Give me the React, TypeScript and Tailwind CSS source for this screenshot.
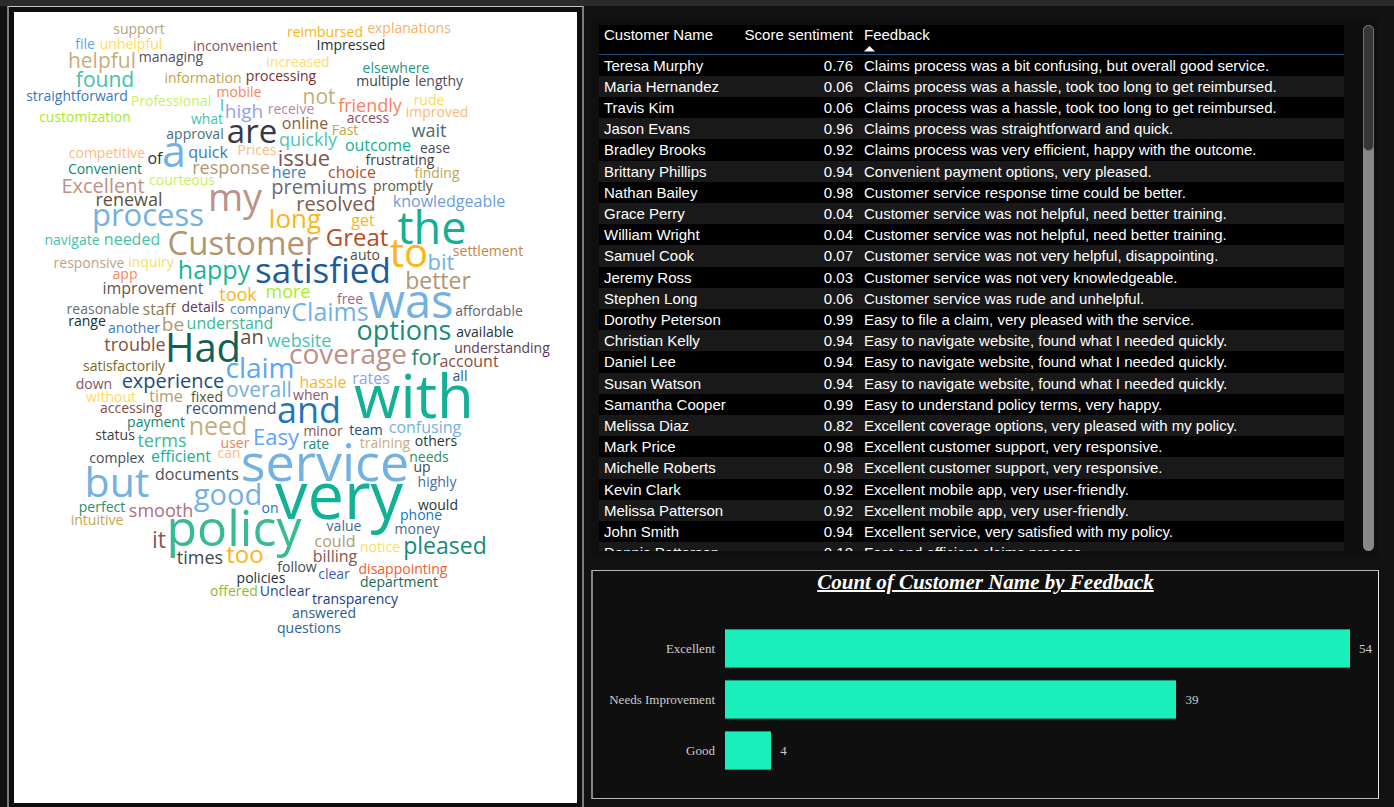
type Word = [text: string, x: number, baseline: number, size: number, color: string];

const WORDS: Word[] = [
  ['support', 139, 33, 14, '#b8a37e'],
  ['file', 85, 48, 14, '#5ba3f5'],
  ['unhelpful', 131, 48, 14, '#ffdc5c'],
  ['inconvenient', 235, 50, 14, '#7f5a63'],
  ['reimbursed', 325, 36, 14, '#f9b414'],
  ['explanations', 409, 32, 14, '#f7b069'],
  ['Impressed', 351, 49, 14, '#1e343a'],
  ['helpful', 102, 67, 21, '#c6ae7c'],
  ['managing', 171, 61, 14, '#50505c'],
  ['increased', 298, 66, 14, '#fbdc70'],
  ['elsewhere', 396, 72, 14, '#2a9587'],
  ['found', 105, 86, 21, '#45c1ad'],
  ['information', 203, 82, 14, '#bea445'],
  ['processing', 281, 80, 14, '#76302f'],
  ['multiple', 383, 85, 14, '#3d4545'],
  ['lengthy', 439, 85, 14, '#4b4c5c'],
  ['straightforward', 77, 100, 14, '#3778bd'],
  ['Professional', 171, 105, 14, '#c5f264'],
  ['mobile', 239, 96, 14, '#f5875e'],
  ['I', 222, 110, 16, '#45c1ad'],
  ['high', 244, 117, 19, '#91a2ea'],
  ['receive', 291, 113, 14, '#bd8698'],
  ['not', 319, 103, 21, '#c6ae7c'],
  ['friendly', 370, 111, 18, '#f5835b'],
  ['rude', 429, 104, 14, '#fbdc59'],
  ['improved', 437, 116, 14, '#fcb973'],
  ['customization', 85, 121, 14, '#a6ec17'],
  ['what', 207, 123, 14, '#45c1ad'],
  ['access', 368, 122, 14, '#83525e'],
  ['online', 305, 128, 16, '#8a5a4a'],
  ['Fast', 345, 134, 14, '#c0a54b'],
  ['wait', 429, 136, 18, '#4d6973'],
  ['approval', 195, 138, 14, '#48707a'],
  ['are', 252, 142, 33, '#353a48'],
  ['quickly', 308, 145, 18, '#4bc6b4'],
  ['outcome', 378, 150, 16, '#12b294'],
  ['ease', 435, 152, 14, '#4b4c58'],
  ['competitive', 107, 157, 14, '#fcbb80'],
  ['of', 155, 163, 16, '#223740'],
  ['a', 174, 166, 43, '#73b1e2'],
  ['quick', 208, 157, 16, '#357abd'],
  ['Prices', 257, 154, 14, '#fcbb80'],
  ['issue', 304, 165, 22, '#7b574c'],
  ['frustrating', 400, 164, 14, '#3c4347'],
  ['Convenient', 105, 173, 14, '#128770'],
  ['response', 231, 173, 18, '#b39670'],
  ['here', 289, 177, 16, '#417ebe'],
  ['choice', 352, 177, 16, '#bb4d2a'],
  ['finding', 437, 177, 14, '#bfa64f'],
  ['Excellent', 103, 192, 20, '#bd9086'],
  ['courteous', 182, 184, 14, '#c5f264'],
  ['premiums', 319, 193, 20, '#686b76'],
  ['promptly', 403, 190, 14, '#5a5a40'],
  ['renewal', 129, 205, 18, '#5b533f'],
  ['my', 235, 210, 38, '#bd9288'],
  ['resolved', 336, 210, 20, '#7b5b51'],
  ['knowledgeable', 449, 206, 16, '#6f9bdc'],
  ['process', 148, 225, 31, '#73b1e2'],
  ['long', 295, 227, 26, '#fdb515'],
  ['get', 363, 225, 16, '#fdb515'],
  ['the', 432, 243, 45, '#12b094'],
  ['navigate', 72, 244, 14, '#45bfae'],
  ['needed', 132, 244, 16, '#45bfa6'],
  ['Customer', 243, 254, 33, '#b29670'],
  ['Great', 357, 245, 24, '#b84c29'],
  ['to', 409, 266, 40, '#fdb515'],
  ['settlement', 488, 255, 14, '#c68444'],
  ['auto', 365, 259, 14, '#544f38'],
  ['responsive', 89, 267, 14, '#bba57f'],
  ['inquiry', 151, 266, 14, '#fbda6e'],
  ['happy', 214, 278, 25, '#17b596'],
  ['satisfied', 323, 282, 35, '#1d5c99'],
  ['bit', 441, 269, 22, '#73b1e2'],
  ['better', 438, 288, 23, '#b29670'],
  ['app', 125, 278, 14, '#f5875e'],
  ['improvement', 153, 293, 16, '#675552'],
  ['took', 238, 300, 18, '#fdb515'],
  ['more', 288, 297, 18, '#a5f01a'],
  ['free', 350, 303, 14, '#a5647c'],
  ['Claims', 330, 320, 25, '#73b1e2'],
  ['was', 411, 317, 47, '#73b1e2'],
  ['affordable', 489, 315, 14, '#62656e'],
  ['reasonable', 103, 313, 14, '#6a6d78'],
  ['staff', 159, 314, 16, '#8a7d5a'],
  ['details', 203, 311, 14, '#5c3557'],
  ['company', 260, 313, 14, '#4c84c0'],
  ['range', 87, 325, 14, '#16302f'],
  ['another', 134, 332, 14, '#427dbe'],
  ['be', 173, 330, 19, '#b29670'],
  ['understand', 230, 328, 16, '#3bb995'],
  ['options', 404, 339, 27, '#178b76'],
  ['available', 485, 336, 14, '#1d3436'],
  ['trouble', 135, 350, 18, '#855043'],
  ['Had', 203, 361, 40, '#126055'],
  ['an', 252, 343, 20, '#5a533d'],
  ['website', 299, 346, 18, '#49c4b4'],
  ['coverage', 348, 363, 28, '#bd9086'],
  ['for', 426, 364, 22, '#278a68'],
  ['account', 469, 366, 16, '#855043'],
  ['understanding', 502, 352, 14, '#5e3b5b'],
  ['satisfactorily', 124, 370, 14, '#7c6a1e'],
  ['claim', 260, 377, 28, '#5ba5fa'],
  ['experience', 173, 387, 20, '#224d7a'],
  ['overall', 259, 396, 21, '#73b1e2'],
  ['hassle', 323, 387, 16, '#fdb515'],
  ['rates', 371, 383, 16, '#8f9fea'],
  ['all', 460, 380, 14, '#285c8c'],
  ['with', 414, 417, 60, '#12b094'],
  ['down', 94, 388, 14, '#805664'],
  ['without', 111, 401, 14, '#ffdc5c'],
  ['time', 166, 401, 16, '#b39a70'],
  ['fixed', 207, 401, 14, '#55503c'],
  ['when', 311, 399, 14, '#85596a'],
  ['accessing', 131, 412, 14, '#855043'],
  ['recommend', 231, 413, 16, '#365b87'],
  ['and', 309, 422, 36, '#2375bb'],
  ['payment', 156, 426, 14, '#128770'],
  ['need', 218, 434, 25, '#c6ae7c'],
  ['Easy', 276, 444, 22, '#5ba5fa'],
  ['minor', 323, 435, 14, '#85584c'],
  ['team', 366, 434, 14, '#234e76'],
  ['confusing', 425, 432, 16, '#73b1e2'],
  ['status', 115, 439, 14, '#3a4042'],
  ['terms', 162, 446, 18, '#3bb995'],
  ['user', 235, 447, 14, '#f47e52'],
  ['rate', 316, 448, 14, '#168b76'],
  ['training', 385, 447, 14, '#c6ae7c'],
  ['others', 436, 445, 14, '#173a30'],
  ['complex', 117, 462, 14, '#484a55'],
  ['efficient', 181, 461, 16, '#15b294'],
  ['can', 229, 457, 14, '#fcbb80'],
  ['needs', 429, 461, 14, '#2a8f6d'],
  ['service', 325, 480, 52, '#73b1e2'],
  ['up', 422, 471, 14, '#43484d'],
  ['but', 117, 496, 41, '#73b1e2'],
  ['documents', 197, 479, 16, '#4a4c5c'],
  ['good', 228, 504, 29, '#73b1e2'],
  ['highly', 437, 486, 14, '#48699a'],
  ['perfect', 102, 511, 14, '#2a8f6d'],
  ['smooth', 161, 516, 18, '#af6d84'],
  ['on', 270, 512, 14, '#1d6fbd'],
  ['very', 339, 518, 65, '#12b094'],
  ['would', 438, 509, 14, '#1b3a32'],
  ['phone', 421, 519, 14, '#1273c4'],
  ['intuitive', 97, 524, 14, '#bfa64f'],
  ['policy', 234, 545, 50, '#38ba95'],
  ['value', 344, 530, 14, '#456891'],
  ['money', 417, 533, 14, '#4b6790'],
  ['it', 159, 547, 23, '#855a50'],
  ['could', 335, 546, 16, '#b39a70'],
  ['notice', 380, 551, 14, '#ffdc5c'],
  ['pleased', 445, 553, 23, '#178b76'],
  ['times', 200, 563, 18, '#41484b'],
  ['too', 245, 562, 24, '#fdb515'],
  ['billing', 335, 561, 16, '#7e574d'],
  ['follow', 297, 571, 14, '#484b4d'],
  ['clear', 334, 578, 14, '#3c5cba'],
  ['disappointing', 403, 573, 14, '#ee5c34'],
  ['policies', 261, 582, 14, '#1b3340'],
  ['department', 399, 586, 14, '#1b6b57'],
  ['offered', 234, 595, 14, '#93b92f'],
  ['Unclear', 285, 595, 14, '#2d3f91'],
  ['transparency', 355, 603, 14, '#243b87'],
  ['answered', 324, 617, 14, '#25608f'],
  ['questions', 309, 632, 14, '#2f6491'],
];

const ROWS: [name: string, score: string, feedback: string][] = [
  ['Teresa Murphy', '0.76', 'Claims process was a bit confusing, but overall good service.'],
  ['Maria Hernandez', '0.06', 'Claims process was a hassle, took too long to get reimbursed.'],
  ['Travis Kim', '0.06', 'Claims process was a hassle, took too long to get reimbursed.'],
  ['Jason Evans', '0.96', 'Claims process was straightforward and quick.'],
  ['Bradley Brooks', '0.92', 'Claims process was very efficient, happy with the outcome.'],
  ['Brittany Phillips', '0.94', 'Convenient payment options, very pleased.'],
  ['Nathan Bailey', '0.98', 'Customer service response time could be better.'],
  ['Grace Perry', '0.04', 'Customer service was not helpful, need better training.'],
  ['William Wright', '0.04', 'Customer service was not helpful, need better training.'],
  ['Samuel Cook', '0.07', 'Customer service was not very helpful, disappointing.'],
  ['Jeremy Ross', '0.03', 'Customer service was not very knowledgeable.'],
  ['Stephen Long', '0.06', 'Customer service was rude and unhelpful.'],
  ['Dorothy Peterson', '0.99', 'Easy to file a claim, very pleased with the service.'],
  ['Christian Kelly', '0.94', 'Easy to navigate website, found what I needed quickly.'],
  ['Daniel Lee', '0.94', 'Easy to navigate website, found what I needed quickly.'],
  ['Susan Watson', '0.94', 'Easy to navigate website, found what I needed quickly.'],
  ['Samantha Cooper', '0.99', 'Easy to understand policy terms, very happy.'],
  ['Melissa Diaz', '0.82', 'Excellent coverage options, very pleased with my policy.'],
  ['Mark Price', '0.98', 'Excellent customer support, very responsive.'],
  ['Michelle Roberts', '0.98', 'Excellent customer support, very responsive.'],
  ['Kevin Clark', '0.92', 'Excellent mobile app, very user-friendly.'],
  ['Melissa Patterson', '0.92', 'Excellent mobile app, very user-friendly.'],
  ['John Smith', '0.94', 'Excellent service, very satisfied with my policy.'],
  ['Dennis Patterson', '0.18', 'Fast and efficient claims process.'],
];

const BARS = [
  { label: 'Excellent', count: 54 },
  { label: 'Needs Improvement', count: 39 },
  { label: 'Good', count: 4 },
];
const MAX_COUNT = 54;

function WordCloud() {
  return (
    <section
      aria-label="Feedback word cloud"
      className="flex border-x-2 border-t border-x-[#7c7c7c] border-t-[#c4c4c4] bg-[#0e0e0e] px-[5px] pt-[5px] pb-1"
    >
      <div className="flex-1 bg-white">
        <svg viewBox="14 11 563 791" preserveAspectRatio="xMidYMin meet" className="block w-full font-['Open_Sans',sans-serif]">
          {WORDS.map(([text, x, baseline, size, color]) => (
            <text key={text} x={x} y={baseline} fontSize={size} fill={color} textAnchor="middle">
              {text}
            </text>
          ))}
        </svg>
      </div>
    </section>
  );
}

function FeedbackTable() {
  return (
    <section aria-label="Customer feedback" className="flex bg-[#0f0f0f] pt-[5px] pr-[5px] pb-[6px] pl-2">
      <div className="h-[526px] flex-1 overflow-y-auto [scrollbar-width:none]">
        <table className="w-full table-fixed border-separate border-spacing-0 font-['Liberation_Sans',Arial,sans-serif] text-[15px] leading-5 text-white">
          <colgroup>
            <col className="w-[140px]" />
            <col className="w-[120px]" />
            <col />
          </colgroup>
          <thead className="sticky top-0 bg-black">
            <tr className="h-[30px]">
              <th scope="col" className="border-b border-[#1b4f7a] p-0 pl-[5px] text-left align-top font-normal whitespace-nowrap">
                Customer Name
              </th>
              <th scope="col" className="border-b border-[#1b4f7a] p-0 pr-[6px] text-right align-top font-normal whitespace-nowrap">
                Score sentiment
              </th>
              <th scope="col" aria-sort="ascending" className="border-b border-[#1b4f7a] p-0 pl-[5px] text-left align-top font-normal">
                <button type="button" className="block text-left">
                  Feedback
                  <svg viewBox="0 0 11 6" className="mt-px block h-[6px] w-[11px] fill-white" aria-hidden="true">
                    <path d="M5.5 0 11 5.5H0Z" />
                  </svg>
                </button>
              </th>
            </tr>
          </thead>
          <tbody>
            {ROWS.map(([name, score, feedback], i) => (
              <tr key={i} className="h-[21px] bg-black even:bg-[#191919] nth-[5n]:h-[22px]">
                <td className="p-0 pl-[5px] whitespace-nowrap">{name}</td>
                <td className="p-0 pr-[6px] text-right">{score}</td>
                <td className="p-0 pl-[5px] whitespace-nowrap">{feedback}</td>
              </tr>
            ))}
          </tbody>
        </table>
      </div>
      <div className="ml-[19px] w-[11px] rounded-full bg-[#878787]">
        <div className="h-[126px] rounded-full border border-[#6e6e6e] bg-[#373635]" />
      </div>
    </section>
  );
}

function FeedbackChart() {
  return (
    <section
      aria-labelledby="chart-title"
      className="border border-l-2 border-[#b8b8b8] border-r-[#e8e8e8] border-l-[#868686] bg-[#0f0f0f] pb-7 font-['Liberation_Serif','Times_New_Roman',serif]"
    >
      <h2 id="chart-title" className="text-center text-[21px] leading-[22px] font-bold text-white italic underline decoration-2">
        Count of Customer Name by Feedback
      </h2>
      <ul className="mt-9 flex flex-col gap-3 text-[13px] text-[#cccccc]">
        {BARS.map(({ label, count }) => (
          <li key={label} className="flex h-[39px] items-center gap-[10px]">
            <span className="w-[122px] text-right whitespace-nowrap">{label}</span>
            <div className="mr-7 flex h-full flex-1 items-center gap-[9px]">
              <div
                className="h-full shrink-0 border-y border-[#129b7a] bg-[#18efba]"
                style={{ width: `${(count / MAX_COUNT) * 100}%` }}
              />
              <span>{count}</span>
            </div>
          </li>
        ))}
      </ul>
    </section>
  );
}

export default function App() {
  return (
    <div className="flex min-h-screen flex-col bg-[#121212]">
      <div className="h-[6px] bg-[#2a2a2a]" />
      <main className="grid flex-1 grid-cols-[577fr_788fr] gap-[7px] pr-[15px] pl-[7px]">
        <WordCloud />
        <div className="flex min-w-0 flex-col gap-[13px] pt-[14px] pb-2">
          <FeedbackTable />
          <FeedbackChart />
        </div>
      </main>
    </div>
  );
}
